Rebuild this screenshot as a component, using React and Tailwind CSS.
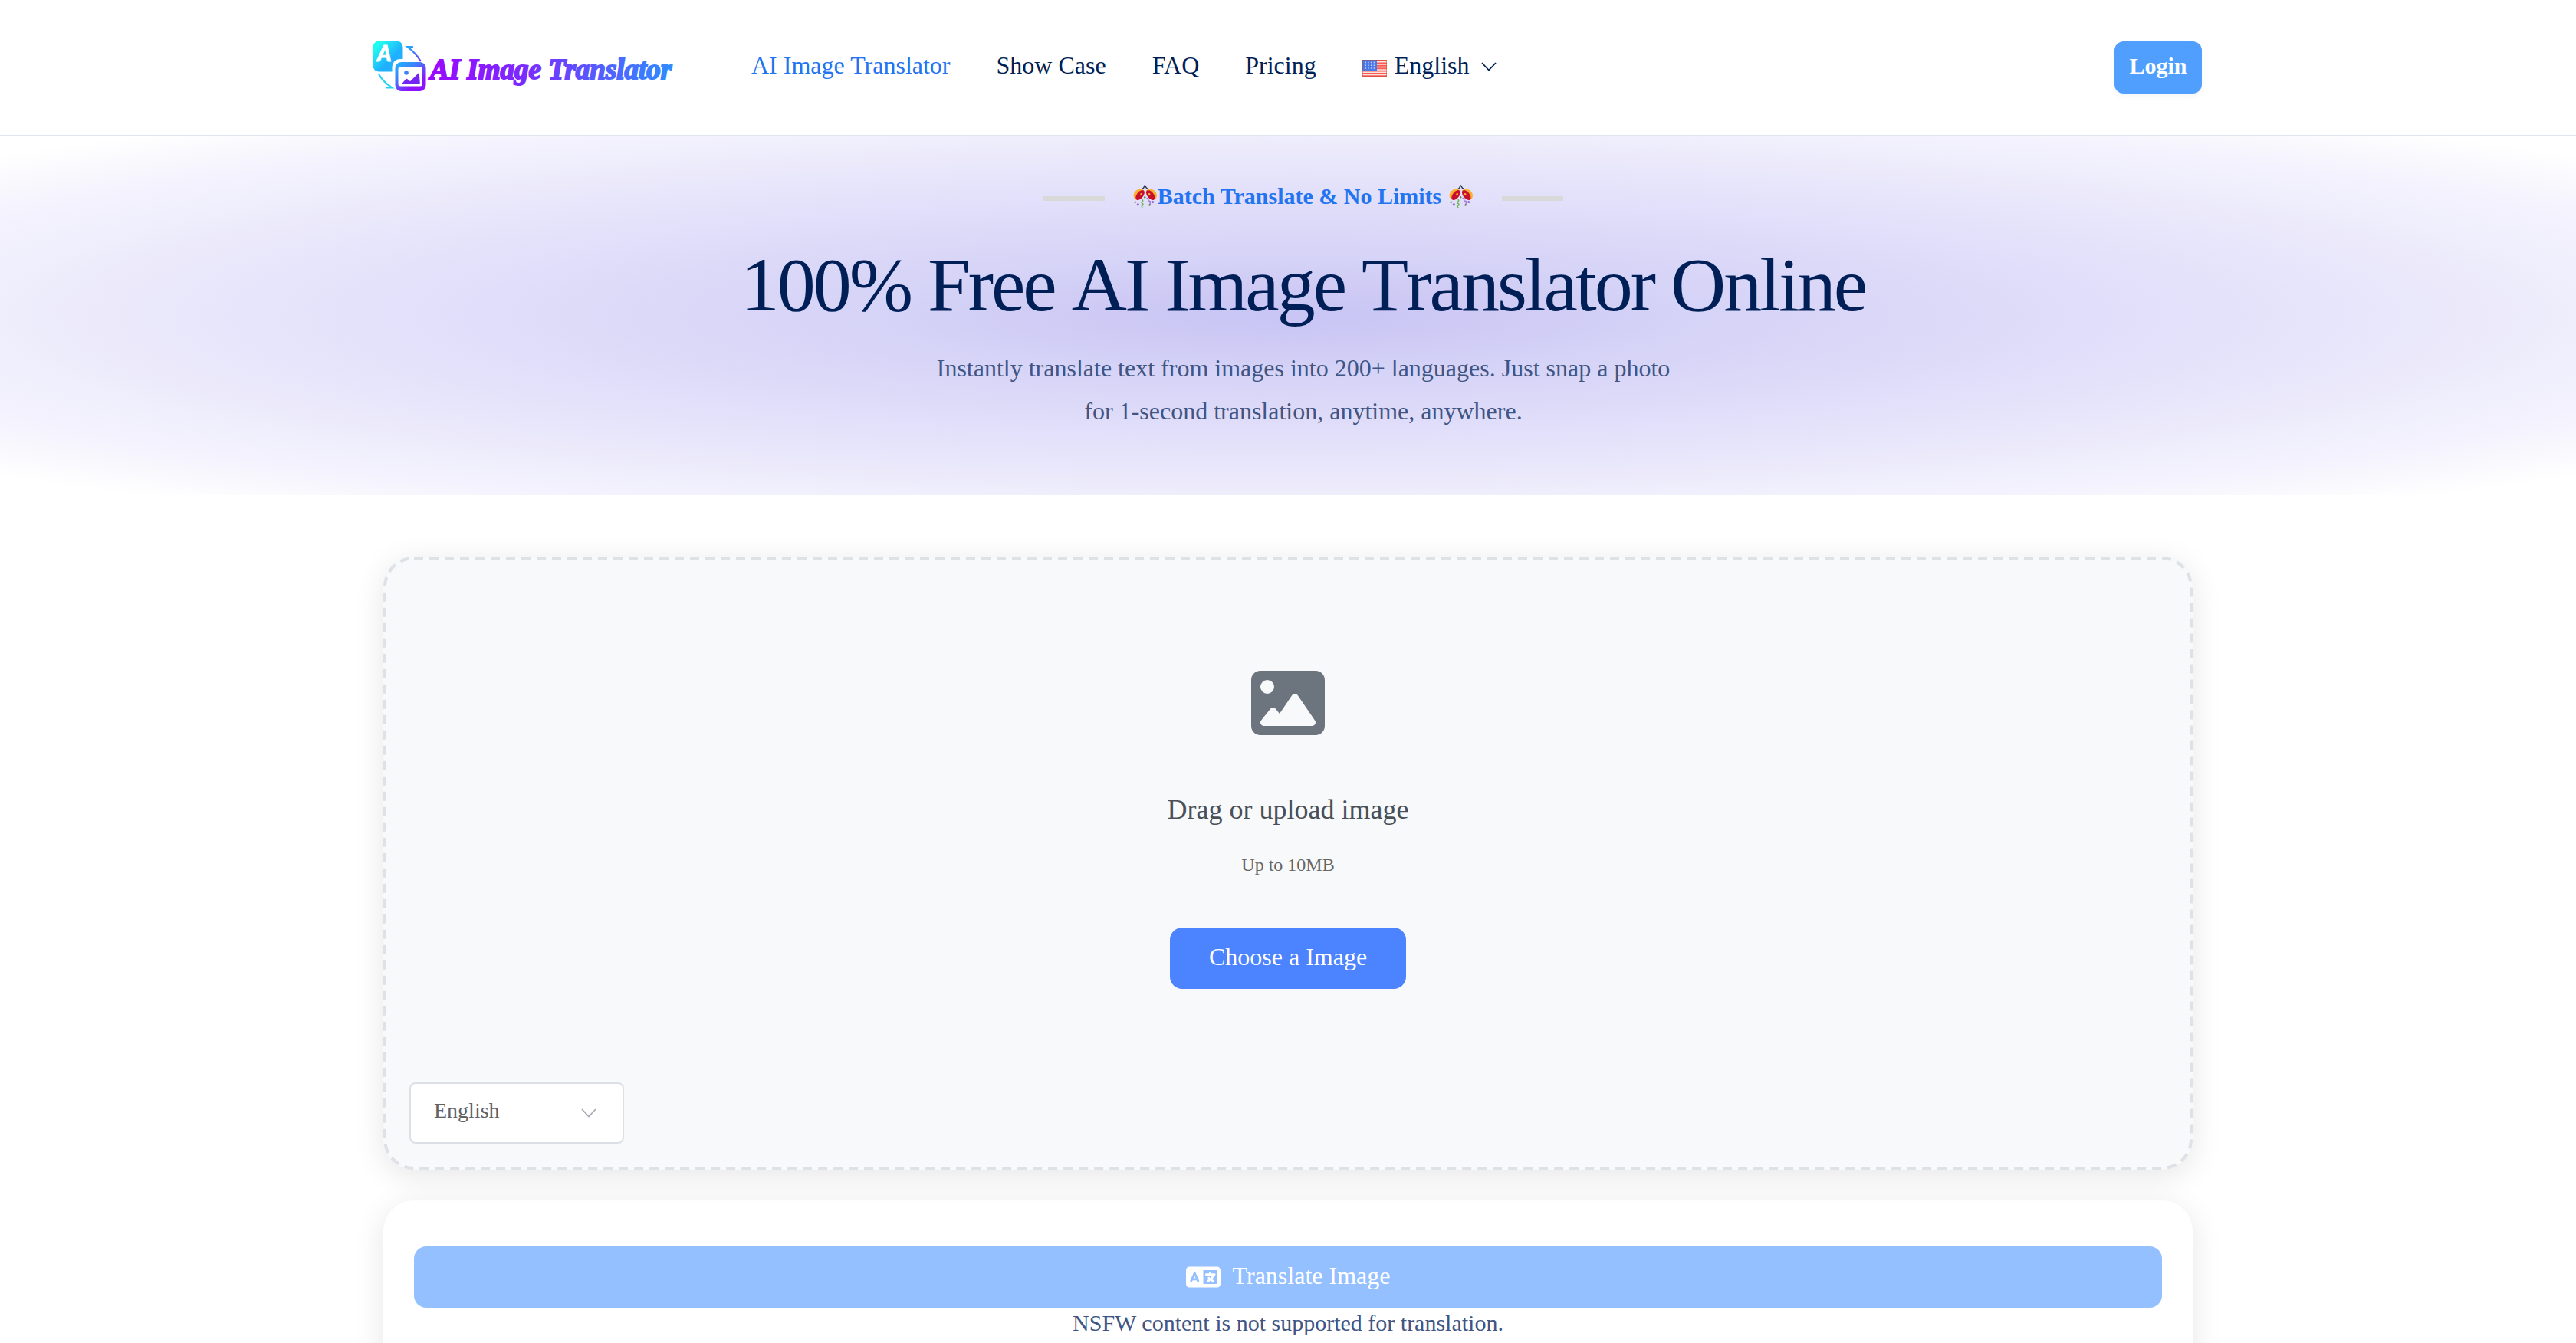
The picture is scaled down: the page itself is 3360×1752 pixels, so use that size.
import React, { useState } from "react";
import { FaImage, FaLanguage } from "react-icons/fa6";

const navLinks = [
    { label: "AI Image Translator", active: true },
    { label: "Show Case" },
    { label: "FAQ" },
    { label: "Pricing" },
];

const languages = ["English", "Français", "Deutsch", "Español"];

function Chevron({ className }) {
    return (
        <svg className={className} viewBox="0 0 20 12" fill="none" stroke="currentColor" strokeWidth="1.8" aria-hidden="true">
            <path d="M1 1 10 10.500 19 1" />
        </svg>
    );
}

function Flag({ className }) {
    return (
        <svg className={className} viewBox="0 0 32 22" aria-hidden="true">
            <rect width="32" height="22" fill="#fbe3dc" />
            <path
                d="M0 1H32M0 4.400H32M0 7.800H32M0 11.200H32M0 14.600H32M0 18H32M0 21.200H32"
                stroke="#fb5b52"
                strokeWidth="1.900"
            />
            <rect width="19" height="15" fill="#4a78e6" />
            <path
                d="M3.500 3.500H17M3.500 7.200H17M3.500 11H17"
                stroke="#c3d3fa"
                strokeWidth="1.500"
                strokeDasharray="1.500 2.200"
            />
            <rect x="0.500" y="0.500" width="31" height="21" fill="none" stroke="#b5483c" strokeOpacity="0.450" />
        </svg>
    );
}

function PartyBall({ className }) {
    return (
        <svg className={className} viewBox="0 0 31 30" aria-hidden="true">
            <path d="M14.800.500 13.200 4 9.800 6.800M14.800.500 16.800 4 20.500 6.800" fill="none" stroke="#2b3340" strokeWidth="1.400" />
            <path d="M14 7.500C10 4.500 4 5.500 1.500 9.500-1 13.500 0 18 3.500 19.500Z" fill="#fdb02f" />
            <path d="M16.500 7.500C20.500 4.500 26.500 5.500 29 9.500 31.500 13.500 30.500 18 27.500 19.500Z" fill="#fdb02f" />
            <ellipse cx="8.600" cy="13.500" rx="4.200" ry="7.600" transform="rotate(38 8.600 13.500)" fill="#c8102e" />
            <ellipse cx="22.200" cy="13.500" rx="4.200" ry="7.600" transform="rotate(-38 22.200 13.500)" fill="#c8102e" />
            <circle cx="10.200" cy="12.300" r="1.300" fill="#fdb02f" />
            <circle cx="20.600" cy="12.300" r="1.300" fill="#fdb02f" />
            <path d="M11 19.500q2.200 1 .4 2.600t.6 2.600q1.400 1.400-.4 2.400t.2 2.700" fill="none" stroke="#6ab84f" strokeWidth="1.500" />
            <path d="M17 17.500q2.600-.4 2.200 1.800t1.600 2q2 .4 1 2.200t.6 2.200" fill="none" stroke="#a479dc" strokeWidth="1.500" />
            <circle cx="14.700" cy="16.200" r="1.200" fill="#5c913b" />
            <circle cx="2.200" cy="22.800" r="1.200" fill="#5c913b" />
            <circle cx="21" cy="26.500" r="1.200" fill="#5c913b" />
            <circle cx="5.800" cy="25.800" r="1.600" fill="#9266cc" />
            <circle cx="25.200" cy="22.600" r="1.500" fill="#9266cc" />
        </svg>
    );
}

function Logo() {
    return (
        <svg className="w-[392px] h-[70px]" viewBox="0 0 392 70" role="img" aria-label="AI Image Translator">
            <defs>
                <linearGradient id="tile" x1="0" y1="0" x2="1" y2="1">
                    <stop offset="0.15" stopColor="#1ffbf0" />
                    <stop offset="0.6" stopColor="#1fb0ff" />
                </linearGradient>
                <linearGradient id="frame" x1="0" y1="0" x2="0.8" y2="1">
                    <stop offset="0" stopColor="#1fb8ff" />
                    <stop offset="0.35" stopColor="#3a86fb" />
                    <stop offset="0.8" stopColor="#8d12ff" />
                </linearGradient>
                <linearGradient id="arrow" x1="0" y1="0" x2="1" y2="1">
                    <stop offset="0" stopColor="#22a8ff" />
                    <stop offset="1" stopColor="#6a3cf5" />
                </linearGradient>
                <linearGradient id="word" x1="0" y1="0" x2="1" y2="0">
                    <stop offset="0" stopColor="#9a08ff" />
                    <stop offset="0.4" stopColor="#7a2cff" />
                    <stop offset="1" stopColor="#2f8cff" />
                </linearGradient>
            </defs>
            <rect x="0.5" y="0.5" width="39" height="40" rx="8" fill="url(#tile)" />
            <rect x="25.5" y="24" width="48" height="46" rx="10" fill="#fff" />
            <rect x="29.5" y="28" width="40" height="38" rx="8" fill="url(#frame)" />
            <rect x="33.5" y="34" width="31.5" height="25.5" rx="3" fill="#fff" />
            <circle cx="44" cy="42" r="2.8" fill="#3c80fb" />
            <path d="M38.2 56.3 43.5 50q1-.8 2 .2l2.500 2.300q1 .8 2-.2L59.600 42.500q1-.8 1.200.5l1 12.200q0 1-1 1.100Z" fill="#7225f5" />
            <path d="M52 8.200H45.500Q56 16 62.300 26.300" fill="none" stroke="url(#arrow)" strokeWidth="2.200" strokeLinecap="round" />
            <path d="M8.500 44.500Q14 54 25.300 61.300H18.500" fill="none" stroke="#22d3f5" strokeWidth="2.200" strokeLinecap="round" />
            <text
                x="6"
                y="27"
                fill="#fff"
                stroke="#fff"
                strokeWidth="1"
                className="font-['Lato'] text-[28px] font-black italic"
            >
                A
            </text>
            <text
                x="75"
                y="50"
                fill="url(#word)"
                stroke="url(#word)"
                strokeWidth="2"
                className="font-['Liberation_Serif'] text-[37px] font-bold italic"
            >
                AI Image Translator
            </text>
        </svg>
    );
}

function Header() {
    return (
        <header className="bg-white border-b-2 border-[#e1e6f2]">
            <div className="flex items-center max-w-[2400px] h-44 mx-auto pl-1.5 pr-2">
                <a href="#" className="shrink-0">
                    <Logo />
                </a>
                <nav className="flex items-center gap-15 ml-[102px] pb-1.5 text-[32px] leading-10 text-[#001f56]">
                    {navLinks.map((link) => (
                        <a key={link.label} href="#" className={link.active ? "text-[#2374f0]" : "hover:text-[#2374f0]"}>
                            {link.label}
                        </a>
                    ))}
                    <button type="button" className="flex items-center">
                        <Flag className="w-8 h-[22px] mt-2 mr-2.5" />
                        English
                        <Chevron className="w-5 h-3 mt-1 ml-4" />
                    </button>
                </nav>
                <button
                    type="button"
                    className="ml-auto w-[114px] h-17 pb-1.5 rounded-xl bg-[#509fff] text-[30px] font-bold text-white shadow-[0_4px_8px_rgba(0,0,0,0.04)]"
                >
                    Login
                </button>
            </div>
        </header>
    );
}

function Hero() {
    return (
        <section className="flex flex-col items-center pt-[58px] pb-[82px] pl-10 text-center bg-[radial-gradient(ellipse_farthest-corner_at_center,#c8c5f5_0%,#cfcbf5_12%,#d5d3f7_22%,#dbd8f8_34%,#e1dffa_46%,#e7e5fb_57%,#ebe9fa_65%,#efeefc_71%,#f4f2fe_80%,#f8f7fd_86%,#ffffff_95%)]">
            <div className="flex items-center gap-[37px]">
                <span className="w-20 h-1.5 mt-1.5 bg-[#d9d9d9]" />
                <p className="flex items-center text-[30px] leading-10 font-bold text-[#2374f0]">
                    <PartyBall className="w-8 h-[30px]" />
                    Batch Translate &amp; No Limits
                    <PartyBall className="w-8 h-[30px] ml-2.5" />
                </p>
                <span className="w-20 h-1.5 mt-1.5 bg-[#d9d9d9]" />
            </div>
            <h1 className="mt-9 text-[100px] leading-[120px] tracking-[-3px] [font-kerning:none] text-[#001f56]">
                100% Free AI Image Translator Online
            </h1>
            <p className="mt-5 text-[32px] leading-14 text-[#405583]">
                Instantly translate text from images into 200+ languages. Just snap a photo
                <br />
                for 1-second translation, anytime, anywhere.
            </p>
        </section>
    );
}

function UploadPanel() {
    const [language, setLanguage] = useState("English");

    return (
        <section className="relative flex flex-col items-center pt-[143px] pb-[34px] px-[34px] rounded-[40px] bg-[#f8f9fb] shadow-[0_8px_40px_rgba(0,0,0,0.1)]">
            {/* dashed outline, drawn so the dash length stays at 12/8 */}
            <svg className="absolute inset-0 w-full h-full pointer-events-none" aria-hidden="true">
                <rect
                    x="2"
                    y="2"
                    rx="38"
                    className="w-[calc(100%-4px)] h-[calc(100%-4px)]"
                    fill="none"
                    stroke="#dee1e6"
                    strokeWidth="4"
                    strokeDasharray="12 8"
                />
            </svg>
            <FaImage className="w-24 h-24 text-[#6c757d]" />
            <h2 className="mt-[67px] text-[36px] leading-12 text-[#495057]">Drag or upload image</h2>
            <p className="mt-8 text-2xl leading-8 text-[#666666]">Up to 10MB</p>
            <button
                type="button"
                className="mt-[66px] px-[51px] pb-1 h-20 rounded-2xl bg-[#4c84ff] text-[32px] text-white hover:bg-[#3a75f5]"
            >
                Choose a Image
            </button>
            <div className="relative self-start mt-[122px]">
                <select
                    aria-label="Target language"
                    value={language}
                    onChange={(e) => setLanguage(e.target.value)}
                    className="block w-[280px] h-20 pl-[30px] pb-1.5 appearance-none rounded-lg border-2 border-[#dcdfe6] bg-white text-[28px] text-[#606266]"
                >
                    {languages.map((name) => (
                        <option key={name}>{name}</option>
                    ))}
                </select>
                <Chevron className="absolute right-9 top-[34px] w-5 h-3 text-[#a8abb2] pointer-events-none" />
            </div>
        </section>
    );
}

function TranslatePanel() {
    return (
        <section className="mt-10 px-10 pt-15 pb-20 rounded-[40px] bg-white text-center shadow-[0_8px_40px_rgba(0,0,0,0.1)]">
            <button
                type="button"
                disabled
                className="flex items-center justify-center gap-4 w-full h-20 rounded-2xl bg-[#95c0ff] text-[32px] text-white"
            >
                <FaLanguage className="w-[45px] h-9" />
                <span className="pb-1">Translate Image</span>
            </button>
            <p className="text-[30px] leading-10 text-[#405583]">NSFW content is not supported for translation.</p>
        </section>
    );
}

function App() {
    return (
        <div className="h-screen overflow-hidden bg-white font-['Liberation_Serif',serif]">
            <Header />
            <Hero />
            <main className="max-w-[2360px] mx-auto mt-20">
                <UploadPanel />
                <TranslatePanel />
            </main>
        </div>
    );
}

export default App;
